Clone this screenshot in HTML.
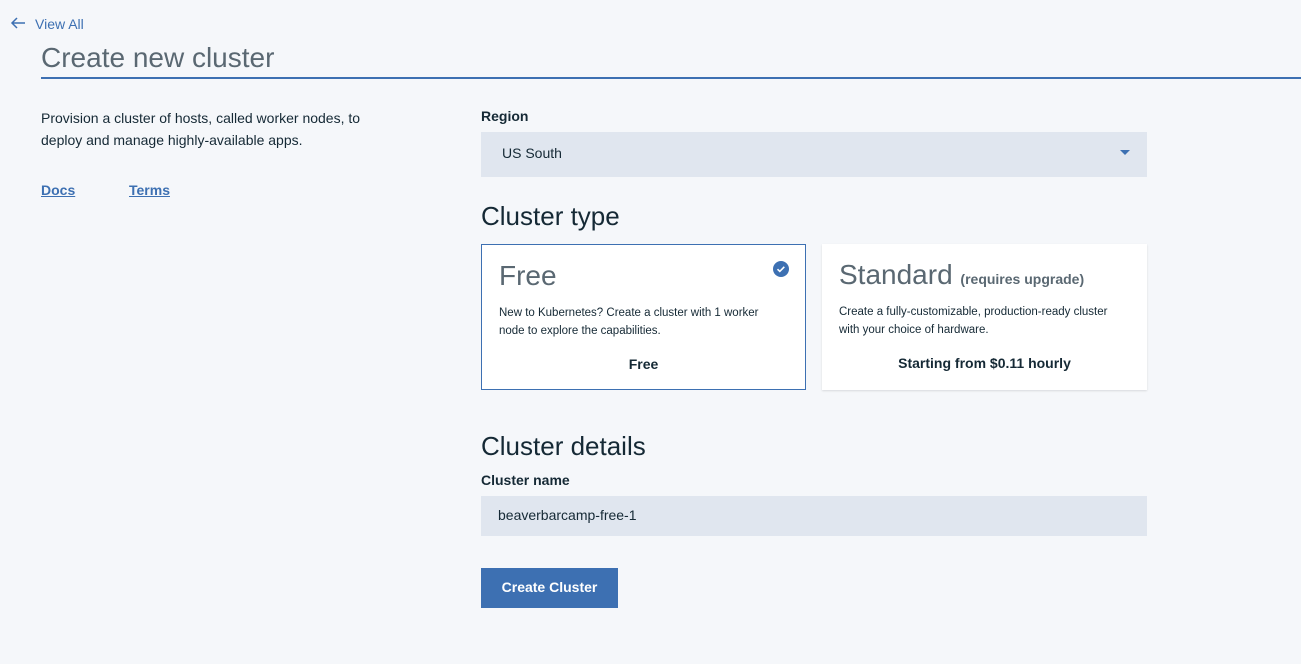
<!DOCTYPE html>
<html><head><style>
body{margin:0;width:1301px;height:664px;background:#f5f7fa;font-family:"Liberation Sans",sans-serif;color:#152935;position:relative;overflow:hidden}
.a{position:absolute;white-space:nowrap}
a{color:#3d70b2;font-weight:bold;font-size:14px;text-decoration:underline}
.card{position:absolute;top:244px;width:325px;height:146px;background:#fff;box-sizing:border-box}
.t{font-size:28px;font-weight:300;color:#5a6872;position:absolute;left:17px;top:15px}
.d{position:absolute;left:17px;top:59px;font-size:11.5px;line-height:18px;color:#152935}
.p{position:absolute;left:0;right:0;top:111px;text-align:center;font-weight:bold;font-size:14px}
</style></head><body>
<svg class="a" style="left:10px;top:16px" width="16" height="14" viewBox="0 0 16 14"><path d="M15 7H2M7 2L2 7l5 5" fill="none" stroke="#3d70b2" stroke-width="1.5"/></svg>
<div class="a" style="left:35px;top:16px;font-size:14px;color:#3d70b2">View All</div>
<div class="a" style="left:41px;top:42px;font-size:28px;font-weight:300;color:#5a6872">Create new cluster</div>
<div class="a" style="left:41px;top:77px;width:1260px;height:2px;background:#3d70b2"></div>
<div class="a" style="left:41px;top:107px;font-size:14px;line-height:22px;color:#152935">Provision a cluster of hosts, called worker nodes, to<br>deploy and manage highly-available apps.</div>
<div class="a" style="left:41px;top:182px"><a>Docs</a></div>
<div class="a" style="left:129px;top:182px"><a>Terms</a></div>
<div class="a" style="left:481px;top:108px;font-size:14px;font-weight:bold">Region</div>
<div class="a" style="left:481px;top:132px;width:666px;height:45px;background:#e0e6ef"></div>
<div class="a" style="left:502px;top:145px;font-size:14px">US South</div>
<svg class="a" style="left:1120px;top:150px" width="10" height="6"><path d="M0 0h10L5 5z" fill="#3d70b2"/></svg>
<div class="a" style="left:481px;top:201px;font-size:26px;font-weight:300">Cluster type</div>
<div class="card" style="left:481px;border:1px solid #3d70b2">
<div class="t">Free</div>
<svg class="a" style="left:291px;top:16px" width="16" height="16"><circle cx="8" cy="8" r="8" fill="#3d70b2"/><path d="M4.5 8.2l2.3 2.2 4.5-4.6" fill="none" stroke="#fff" stroke-width="1.6"/></svg>
<div class="d">New to Kubernetes? Create a cluster with 1 worker<br>node to explore the capabilities.</div>
<div class="p">Free</div></div>
<div class="card" style="left:822px;box-shadow:0 1px 2px rgba(0,0,0,.12)">
<div class="t">Standard <span style="font-size:14px;font-weight:bold">(requires upgrade)</span></div>
<div class="d">Create a fully-customizable, production-ready cluster<br>with your choice of hardware.</div>
<div class="p">Starting from $0.11 hourly</div></div>
<div class="a" style="left:481px;top:431px;font-size:26px;font-weight:300">Cluster details</div>
<div class="a" style="left:481px;top:472px;font-size:14px;font-weight:bold">Cluster name</div>
<div class="a" style="left:481px;top:496px;width:666px;height:40px;background:#e0e6ef"></div>
<div class="a" style="left:498px;top:507px;font-size:14px">beaverbarcamp-free-1</div>
<div class="a" style="left:481px;top:568px;width:137px;height:40px;background:#3d70b2;color:#fff;font-size:14px;font-weight:bold;text-align:center;line-height:38px">Create Cluster</div>
</body></html>
